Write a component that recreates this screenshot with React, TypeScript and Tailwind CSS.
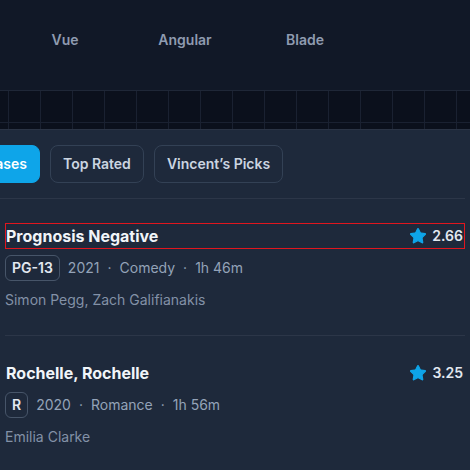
import React from "react";
import { Star } from "lucide-react";

interface Movie {
  title: string;
  rating: string;
  cert: string;
  year: string;
  genre: string;
  runtime: string;
  cast: string;
  focused?: boolean;
}

const movies: Movie[] = [
  {
    title: "Prognosis Negative",
    rating: "2.66",
    cert: "PG-13",
    year: "2021",
    genre: "Comedy",
    runtime: "1h 46m",
    cast: "Simon Pegg, Zach Galifianakis",
    focused: true,
  },
  {
    title: "Rochelle, Rochelle",
    rating: "3.25",
    cert: "R",
    year: "2020",
    genre: "Romance",
    runtime: "1h 56m",
    cast: "Emilia Clarke",
  },
];

const frameworks = ["Vue", "Angular", "Blade"];

const MovieRow = ({ movie }: { movie: Movie }) => {
  return (
    <li className="pt-6 pb-[25px] border-b border-[#2c3648]">
      <div
        className={`flex items-center justify-between pr-px leading-[23px] border ${
          movie.focused ? "border-[#e0161e]" : "border-transparent"
        }`}
      >
        <h3 className="text-base font-bold text-[#f1f5f9]">{movie.title}</h3>
        <div className="flex items-center gap-[5px]">
          <Star className="w-[18px] h-[18px] text-[#0ea5e9] fill-[#0ea5e9]" strokeWidth={1.5} />
          <span className="text-sm font-semibold text-[#e2e8f0]">{movie.rating}</span>
        </div>
      </div>
      <div className="mt-[6px] flex items-center gap-2 text-sm text-[#94a3b8]">
        <span className="border border-[#475569] rounded-md px-1.5 py-0.5 font-semibold text-[#e2e8f0] leading-5">
          {movie.cert}
        </span>
        <span>{movie.year}</span>
        <span>·</span>
        <span>{movie.genre}</span>
        <span>·</span>
        <span>{movie.runtime}</span>
      </div>
      <p className="mt-[9px] text-sm leading-5 text-[#8391a7]">{movie.cast}</p>
    </li>
  );
};

export default function App() {
  return (
    <div
      className="w-[470px] h-[470px] overflow-hidden bg-[#1e293b]"
      style={{ fontFamily: "Inter, 'Noto Sans', sans-serif" }}
    >
      {/* framework switcher */}
      <div className="bg-[#111827] border-b border-[#1f2737] pt-[30px] pb-10">
        <div className="grid grid-cols-[repeat(3,120px)] pl-[5px]">
          {frameworks.map((f) => (
            <span
              key={f}
              className="text-center text-sm leading-5 font-semibold text-[#8f9bb0]"
            >
              {f}
            </span>
          ))}
        </div>
      </div>

      {/* grid strip */}
      <div className="h-[39px] bg-[#0b101c] bg-[linear-gradient(to_right,#1a2131_1px,transparent_1px),linear-gradient(to_bottom,#1a2131_1px,transparent_1px)] bg-[size:32px_32px] bg-[position:8px_31px] border-b border-[#2b3445]" />

      <div className="px-[5px]">
        {/* tabs */}
        <div className="flex gap-[10px] py-[15px] -ml-[86px] border-b border-[#2c3648]">
          <button className="bg-[#0ea5e9] text-white text-sm font-semibold rounded-lg px-3 py-2 leading-5 border border-[#0ea5e9] whitespace-nowrap">
            New Releases
          </button>
          <button className="border border-[#334155] text-[#cbd5e1] text-sm font-semibold rounded-lg px-3 py-2 leading-5 whitespace-nowrap">
            Top Rated
          </button>
          <button className="border border-[#334155] text-[#cbd5e1] text-sm font-semibold rounded-lg px-3 py-2 leading-5 whitespace-nowrap">
            Vincent’s Picks
          </button>
        </div>

        <ul>
          {movies.map((m) => (
            <MovieRow key={m.title} movie={m} />
          ))}
        </ul>
      </div>
    </div>
  );
}
